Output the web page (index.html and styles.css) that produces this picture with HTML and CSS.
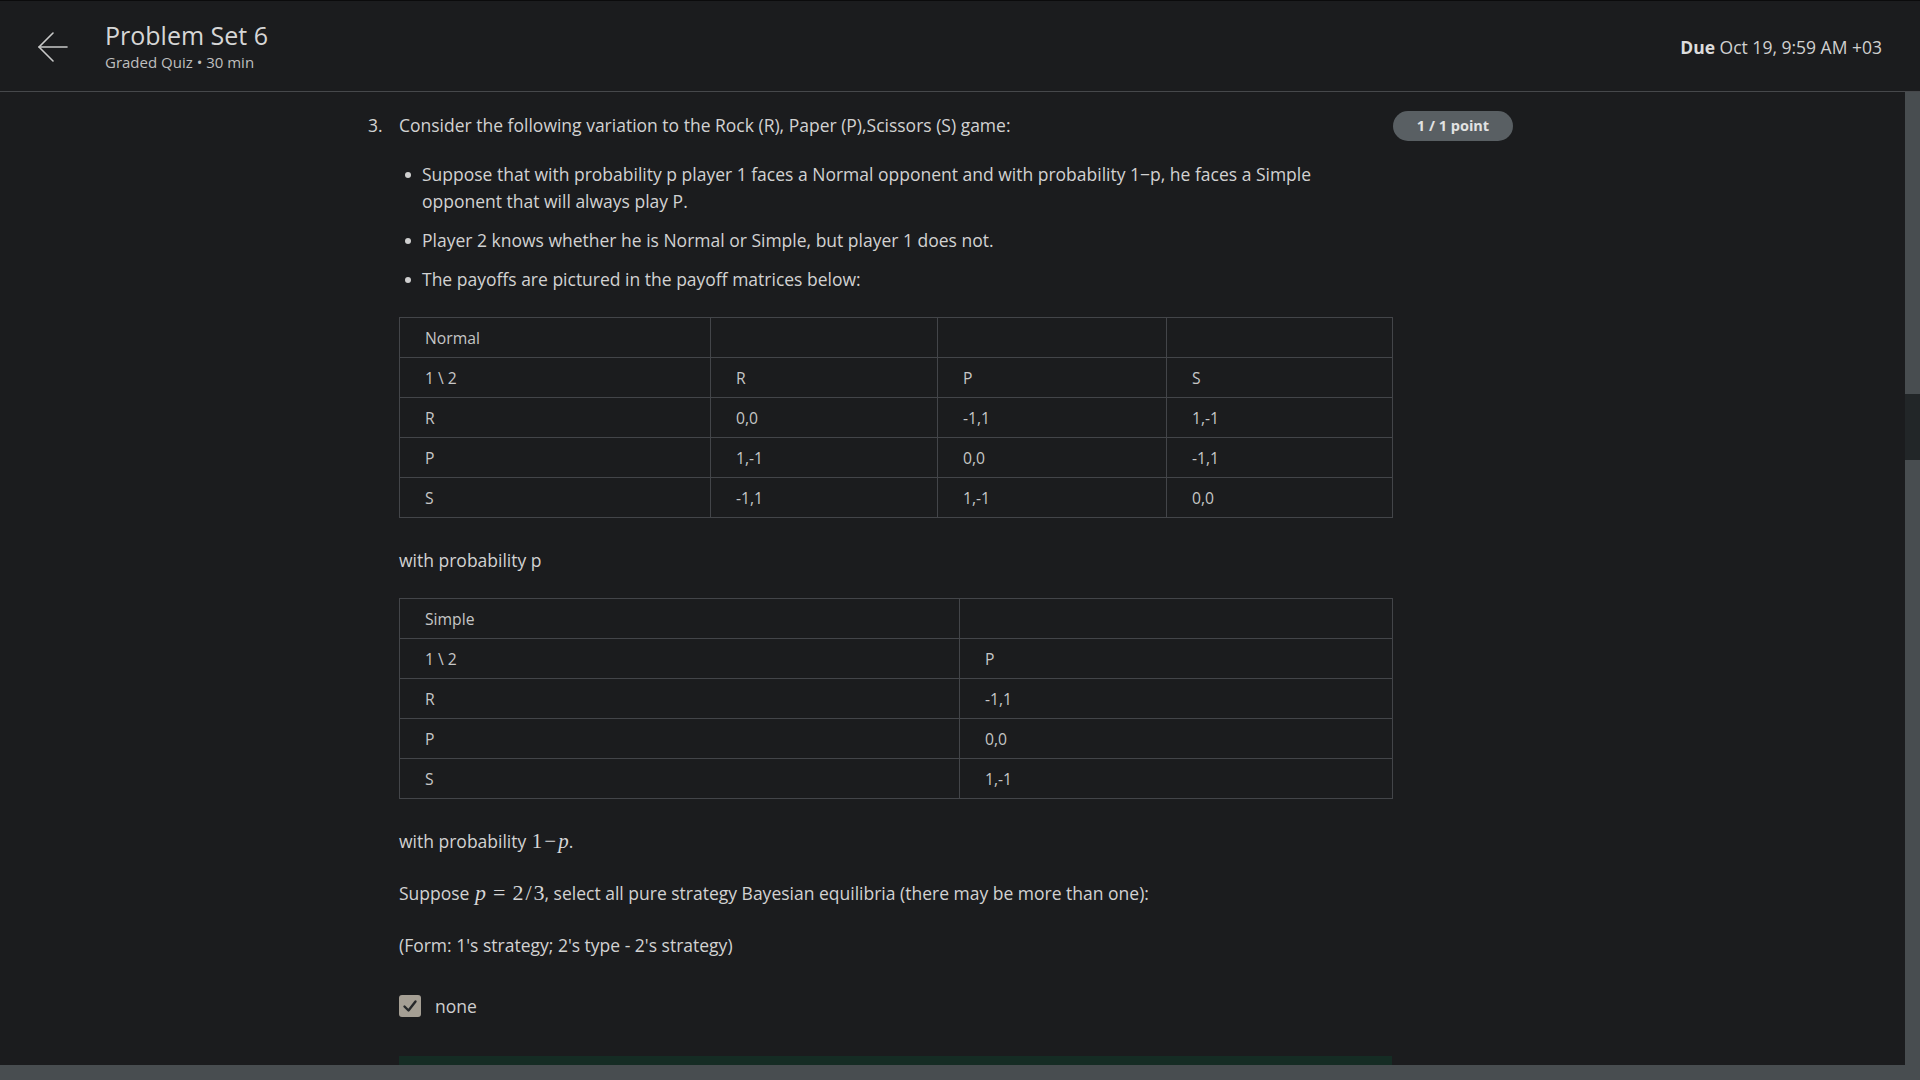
FILE: index.html
```html
<!DOCTYPE html>
<html lang="en">
<head>
<meta charset="utf-8">
<title>Problem Set 6</title>
<link rel="stylesheet" href="styles.css">
</head>
<body>
<header class="topbar">
  <div class="topbar-left">
    <svg class="back-icon" width="30" height="30" viewBox="0 0 30 30" fill="none" stroke="#c9c9c9" stroke-width="1.6" stroke-linecap="round" stroke-linejoin="round">
      <path d="M29 15H1"/>
      <path d="M15 1L1 15L15 29"/>
    </svg>
    <div class="title-block">
      <div class="title">Problem Set 6</div>
      <div class="subtitle">Graded Quiz • 30 min</div>
    </div>
  </div>
  <div class="due"><b>Due</b> Oct 19, 9:59 AM +03</div>
</header>

<div class="viewport">
  <div class="scroll-area">
    <main class="content">
      <div class="question">
        <div class="qnum">3.</div>
        <div class="qbody">
          <p class="line">Consider the following variation to the Rock (R), Paper (P),Scissors (S) game:</p>
          <ul class="bullets">
            <li>Suppose that with probability p player 1 faces a Normal opponent and with probability 1−p, he faces a Simple opponent that will always play P.</li>
            <li>Player 2 knows whether he is Normal or Simple, but player 1 does not.</li>
            <li>The payoffs are pictured in the payoff matrices below:</li>
          </ul>

          <table class="matrix matrix-normal">
            <colgroup>
              <col class="c-first"><col class="c-n2"><col class="c-n3"><col class="c-n4">
            </colgroup>
            <tr><td>Normal</td><td></td><td></td><td></td></tr>
            <tr><td>1 \ 2</td><td>R</td><td>P</td><td>S</td></tr>
            <tr><td>R</td><td>0,0</td><td>-1,1</td><td>1,-1</td></tr>
            <tr><td>P</td><td>1,-1</td><td>0,0</td><td>-1,1</td></tr>
            <tr><td>S</td><td>-1,1</td><td>1,-1</td><td>0,0</td></tr>
          </table>

          <p class="line after-table">with probability p</p>

          <table class="matrix matrix-simple">
            <colgroup>
              <col class="c-s1"><col class="c-s2">
            </colgroup>
            <tr><td>Simple</td><td></td></tr>
            <tr><td>1 \ 2</td><td>P</td></tr>
            <tr><td>R</td><td>-1,1</td></tr>
            <tr><td>P</td><td>0,0</td></tr>
            <tr><td>S</td><td>1,-1</td></tr>
          </table>

          <p class="line after-table">with probability <span class="math">1<span class="op">−</span><i>p</i></span>.</p>
          <p class="line gap">Suppose <span class="math math-lg"><i>p</i><span class="rel">=</span>2<span class="slash">/</span>3</span>, select all pure strategy Bayesian equilibria (there may be more than one):</p>
          <p class="line gap">(Form: 1's strategy; 2's type - 2's strategy)</p>

          <div class="option">
            <span class="checkbox">
              <svg width="22" height="22" viewBox="0 0 22 22" fill="none" stroke="#26282a" stroke-width="2.4" stroke-linecap="round" stroke-linejoin="round">
                <path d="M5.5 11.5L9.5 15.5L16.5 6.5"/>
              </svg>
            </span>
            <span class="option-label">none</span>
          </div>

          <div class="feedback"></div>
        </div>
        <div class="badge">1 / 1 point</div>
      </div>
    </main>
  </div>
  <div class="vscroll">
    <div class="vs-top"></div>
    <div class="vs-thumb"></div>
    <div class="vs-bottom"></div>
  </div>
</div>
<div class="hscroll"></div>
</body>
</html>
```

FILE: styles.css
```css
* { box-sizing: border-box; }

html, body {
  margin: 0;
  padding: 0;
}

body {
  width: 1920px;
  height: 1080px;
  overflow: hidden;
  background: #1b1c1e;
  color: #d2d2d2;
  font-family: "Open Sans", "Noto Sans", "Liberation Sans", sans-serif;
  display: flex;
  flex-direction: column;
}

/* Header */
.topbar {
  height: 92px;
  flex: none;
  border-top: 1px solid #0b0b0c;
  border-bottom: 1px solid #46484b;
  background: #1b1c1e;
  display: flex;
  align-items: center;
  justify-content: space-between;
  padding: 0 38px;
}

.topbar-left {
  display: flex;
  align-items: center;
}

.back-icon {
  display: block;
  margin-top: 1px;
}

.title-block {
  margin-left: 37px;
  margin-top: 0;
}

.title {
  font-size: 25px;
  line-height: 30px;
  color: #d6d6d6;
}

.subtitle {
  font-size: 15px;
  line-height: 22px;
  margin-top: 1px;
  color: #bfbfbf;
}

.due {
  font-size: 17.5px;
  color: #d0d0d0;
  margin-top: 1px;
}

.due b {
  font-weight: 700;
  color: #dcdcdc;
}

/* Viewport + scrollbars */
.viewport {
  flex: 1;
  display: flex;
  min-height: 0;
}

.scroll-area {
  flex: 1;
  overflow: hidden;
}

.vscroll {
  width: 15px;
  flex: none;
  display: flex;
  flex-direction: column;
}

.vs-top {
  height: 302px;
  background: #484d50;
}

.vs-thumb {
  height: 66px;
  background: #222628;
}

.vs-bottom {
  flex: 1;
  background: #484d50;
}

.hscroll {
  height: 15px;
  flex: none;
  background: #484d50;
}

/* Content */
.content {
  padding: 20px 0 0 368px;
}

.question {
  display: flex;
  align-items: flex-start;
}

.qnum {
  width: 31px;
  flex: none;
  font-size: 17.5px;
  line-height: 27px;
}

.qbody {
  width: 993px;
  flex: none;
}

.line {
  margin: 0;
  font-size: 17.5px;
  line-height: 27px;
}

.bullets {
  list-style: none;
  margin: 22px 0 0;
  padding: 0;
}

.bullets li {
  position: relative;
  padding-left: 23px;
  font-size: 17.5px;
  line-height: 27px;
  margin-bottom: 12px;
}

.bullets li:last-child {
  margin-bottom: 0;
}

.bullets li::before {
  content: "";
  position: absolute;
  left: 6px;
  top: 11px;
  width: 6px;
  height: 6px;
  border-radius: 50%;
  background: #cfcfcf;
}

/* Tables */
.matrix {
  width: 993px;
  border-collapse: collapse;
  table-layout: fixed;
  border: 1px solid #434549;
  margin-top: 24px;
}

.matrix td {
  border: 1px solid #434549;
  padding: 10px 25px 8px 25px;
  font-size: 15.7px;
  line-height: 21px;
  color: #c6c6c6;
}

.c-first { width: 311px; }
.c-n2 { width: 227px; }
.c-n3 { width: 229px; }
.c-n4 { width: 226px; }
.c-s1 { width: 560px; }
.c-s2 { width: 433px; }

.after-table {
  margin-top: 29px;
}

.gap {
  margin-top: 25px;
}

.math {
  font-family: "Liberation Serif", "DejaVu Serif", serif;
  font-size: 21px;
  line-height: 1;
  color: #d6d6d6;
  margin-left: 1px;
}

.math-lg {
  font-size: 22px;
}

.math i {
  font-style: italic;
}

.math .op {
  padding: 0 2px;
}

.math .rel {
  padding: 0 7px;
}

.math .slash {
  padding: 0 2px;
}

/* Option */
.option {
  margin-top: 36px;
  display: flex;
  align-items: center;
  height: 22px;
}

.checkbox {
  width: 22px;
  height: 22px;
  border-radius: 3px;
  background: #a59f94;
  display: block;
  flex: none;
}

.checkbox svg {
  display: block;
}

.option-label {
  margin-left: 14px;
  font-size: 17.5px;
  line-height: 22px;
  color: #cfcfcf;
}

.feedback {
  margin-top: 39px;
  height: 40px;
  background: #152c24;
}

/* Badge */
.badge {
  flex: none;
  margin-left: 1px;
  margin-top: -1px;
  width: 120px;
  height: 30px;
  border-radius: 15px;
  background: #595f63;
  color: #e2e2e2;
  font-size: 14.5px;
  font-weight: 700;
  line-height: 30px;
  text-align: center;
}
```
